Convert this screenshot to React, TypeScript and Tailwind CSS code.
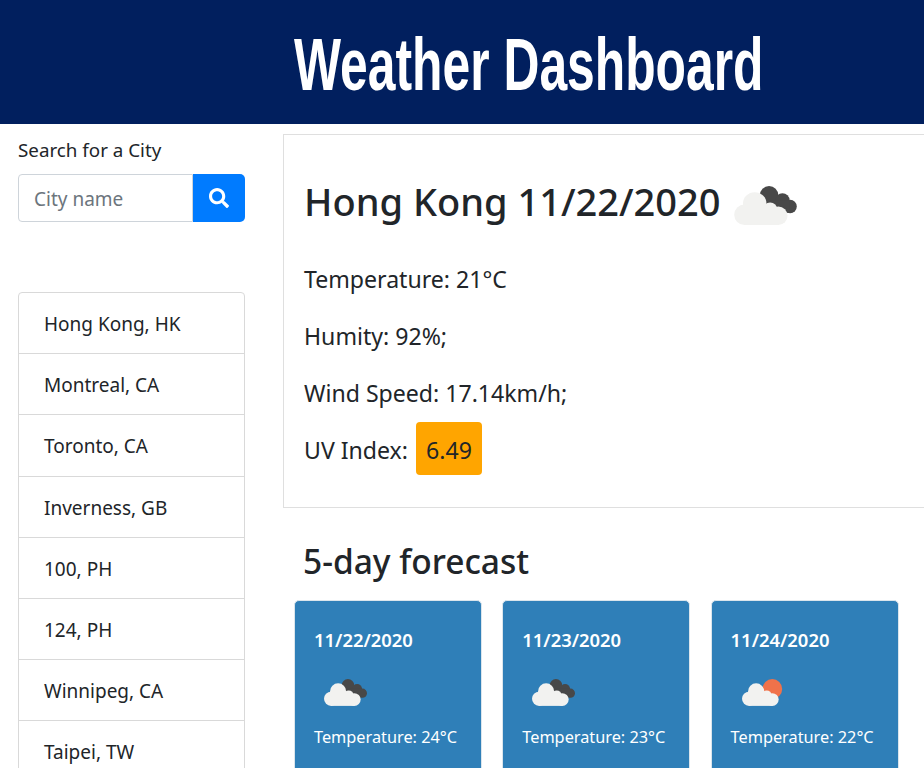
import React from 'react';
import { FaSearch } from 'react-icons/fa';

const cities = ['Hong Kong, HK', 'Montreal, CA', 'Toronto, CA', 'Inverness, GB', '100, PH', '124, PH', 'Winnipeg, CA', 'Taipei, TW'];

const forecast = [
  { date: '11/22/2020', temp: '24', sun: false },
  { date: '11/23/2020', temp: '23', sun: false },
  { date: '11/24/2020', temp: '22', sun: true },
];

// scattered clouds / few clouds icon
const WeatherIcon = ({ sun, className }: { sun: boolean; className: string }) => (
  <svg viewBox="0 0 61 38" className={className}>
    {sun ? (
      <circle cx="43" cy="14" r="14" fill="#f0724a" />
    ) : (
      <g fill="#484848">
        <circle cx="34" cy="9" r="9" />
        <circle cx="47" cy="14" r="7" />
        <circle cx="54.5" cy="20" r="6.5" />
        <rect x="34" y="14" width="20" height="12" />
      </g>
    )}
    <g fill="#f2f2f0">
      <circle cx="10" cy="28" r="10" />
      <circle cx="20" cy="17.5" r="11.5" />
      <circle cx="35" cy="23" r="7" />
      <circle cx="43" cy="29" r="9" />
      <rect x="10" y="24" width="33" height="14" />
    </g>
  </svg>
);

export default function App() {
  return (
    <div className="h-[768px] w-[924px] overflow-hidden bg-white font-['Noto_Sans',sans-serif] text-[#212529]">
      <header className="flex h-[124px] items-center bg-[#011f5e] pt-[4px] pl-[294px]">
        <h1 className="origin-left scale-x-[0.664] whitespace-nowrap font-['Liberation_Sans',sans-serif] text-[75px] leading-none font-bold text-white">
          Weather Dashboard
        </h1>
      </header>

      <div className="flex">
        <aside className="ml-[18px] w-[227px] shrink-0">
          <label className="mt-[13px] block text-[18.8px] leading-[27px]">Search for a City</label>
          <div className="mt-[10px] flex h-[48px]">
            <input
              placeholder="City name"
              className="w-[175px] rounded-l border border-[#ced4da] px-[15px] pt-[2px] text-[19px] text-[#495057] placeholder:text-[#6c757d]"
            />
            <button className="flex w-[52px] items-center justify-center rounded-r-[5px] bg-[#007bff] text-white">
              <FaSearch size={20} />
            </button>
          </div>
          <ul className="mt-[70px] rounded border border-[#d9d9d9]">
            {cities.map((c, i) => (
              <li
                key={c}
                className={`px-[25px] text-[19px] leading-[30px] ${i > 0 ? 'h-[61.2px] border-t border-[#d9d9d9] pt-[16px]' : 'h-[60.2px] pt-[16px]'}`}
              >
                {c}
              </li>
            ))}
          </ul>
        </aside>

        <main className="ml-[38px] w-[700px] shrink-0 pt-[10px]">
          <section className="h-[374px] border border-[#dfdfdf] px-[20px] pt-[39px]">
            <div className="flex items-center">
              <h2 className="text-[38px] leading-[54px] font-[550]">Hong Kong 11/22/2020</h2>
              <WeatherIcon sun={false} className="mt-[8px] ml-[13px] h-[39px] w-[63px]" />
            </div>
            <p className="mt-[35px] text-[23.1px] leading-[33px]">Temperature: 21°C</p>
            <p className="mt-[24px] text-[23.1px] leading-[33px]">Humity: 92%;</p>
            <p className="mt-[24px] text-[23.1px] leading-[33px]">Wind Speed: 17.14km/h;</p>
            <p className="mt-[12px] flex items-center text-[23.1px]">
              <span className="pt-[3px]">UV Index:</span>
              <span className="ml-[8px] flex h-[53px] w-[66px] items-center justify-center rounded bg-[#ffa500] pt-[3px]">6.49</span>
            </p>
          </section>

          <h3 className="mt-[29px] ml-[20px] text-[33.5px] leading-[48px] font-[550]">5-day forecast</h3>

          <div className="mt-[15px] ml-[11px] flex gap-[20.3px]">
            {forecast.map(f => (
              <div key={f.date} className="h-[200px] w-[188px] rounded-[5px] border border-[#dbe5ec] bg-[#2f7fb8] px-[19px] pt-[25px] text-white">
                <div className="text-[18.4px] leading-[27px] font-semibold">{f.date}</div>
                <WeatherIcon sun={f.sun} className={`mt-[26px] h-[27px] w-[43px] ${f.sun ? 'ml-[11px]' : 'ml-[10px]'}`} />
                <p className="mt-[19px] text-[16.3px] leading-[24px]">Temperature: {f.temp}°C</p>
              </div>
            ))}
          </div>
        </main>
      </div>
    </div>
  );
}
